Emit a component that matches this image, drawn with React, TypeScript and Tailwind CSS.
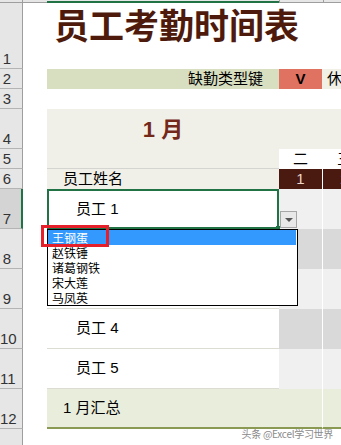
import type { ReactNode } from 'react'

type Cell = { cls?: string; children?: ReactNode }

function Row({ num, h, sel, b, c, d }: { num: string; h: string; sel?: boolean; b: Cell; c: Cell; d: Cell }) {
  return (
    <div className={`flex ${h}`}>
      {/* row header */}
      <div
        className={`w-[23px] shrink-0 border-b border-[#b4b4b4] flex items-end pb-[2px] text-[15px] leading-none text-[#333] ${
          sel ? 'bg-[#d4d4d4] border-r-2 border-r-[#217346]' : 'bg-[#e6e6e6] border-r border-r-[#9e9e9e]'
        }`}
      >
        <span className="w-[14px] text-center">{num}</span>
      </div>
      <div className="w-[24px] shrink-0 bg-white" />
      <div className={`w-[232px] shrink-0 flex items-center text-[15px] ${b.cls ?? 'bg-white'}`}>{b.children}</div>
      <div className={`w-[43px] shrink-0 flex items-center justify-center text-[15px] ${c.cls ?? 'bg-white'}`}>{c.children}</div>
      <div className={`w-[44px] shrink-0 border-l flex items-center text-[15px] ${d.cls ?? 'bg-white border-l-white'}`}>{d.children}</div>
    </div>
  )
}

const names = ['王钢蛋', '赵铁锤', '诸葛钢铁', '宋大莲', '马凤英']

export default function App() {
  return (
    <div className="relative w-[341px] h-[445px] overflow-hidden bg-white text-black font-['Liberation_Sans','Noto_Sans_CJK_SC',sans-serif]">
      {/* column header strip */}
      <div className="flex h-[3px]">
        <div className="w-[23px] shrink-0 bg-[#e6e6e6] border-r border-b border-[#9e9e9e]" />
        <div className="w-[24px] shrink-0 bg-[#e6e6e6] border-b border-[#9e9e9e]" />
        <div className="w-[232px] shrink-0 bg-[#e6e6e6] border-b-2 border-[#217346]" />
        <div className="w-[44px] shrink-0 bg-[#e6e6e6] border-l border-b border-[#9e9e9e]" />
        <div className="w-[44px] shrink-0 bg-[#e6e6e6] border-l border-b border-[#9e9e9e]" />
      </div>

      <Row
        num="1"
        h="h-[66px]"
        b={{
          cls: 'relative z-10 bg-white items-start pl-[7px] pt-[6px]',
          children: (
            <span className="text-[35px] leading-none font-bold text-[#4e1a0c] whitespace-nowrap">员工考勤时间表</span>
          ),
        }}
        c={{}}
        d={{}}
      />
      <Row
        num="2"
        h="h-[20px]"
        b={{ cls: 'bg-[#d8dec0] justify-end pr-[16px]', children: '缺勤类型键' }}
        c={{ cls: 'bg-[#e07262] font-bold', children: 'V' }}
        d={{ cls: 'bg-[#f0f0e6] border-l-[#f0f0e6] pl-[4px]', children: '休' }}
      />
      <Row num="3" h="h-[20px]" b={{}} c={{}} d={{}} />
      <Row
        num="4"
        h="h-[40px]"
        b={{
          cls: 'bg-[#f0f0e8] justify-center',
          children: <span className="text-[22px] font-bold text-[#74281a]">1 月</span>,
        }}
        c={{ cls: 'bg-[#f0f0e8]' }}
        d={{ cls: 'bg-[#f0f0e8] border-l-[#f0f0e8]' }}
      />
      <Row
        num="5"
        h="h-[20px]"
        b={{ cls: 'bg-[#f0f0e8] border-b border-[#d4d4d0]' }}
        c={{ children: '二' }}
        d={{ cls: 'bg-white border-l-white justify-center', children: '三' }}
      />
      <Row
        num="6"
        h="h-[20px]"
        b={{ cls: 'bg-[#f0f0e8] pl-[16px]', children: '员工姓名' }}
        c={{ cls: 'bg-[#4a1a10] text-[#ead6cc]', children: '1' }}
        d={{ cls: 'bg-[#4a1a10] border-l-white justify-center text-[#ead6cc]', children: '2' }}
      />
      <Row
        num="7"
        h="h-[40px]"
        sel
        b={{
          cls: 'relative bg-white border-2 border-[#217346] pl-[27px]',
          children: (
            <>
              员工 1
              <span className="absolute right-[-3px] bottom-[-2px] w-[4px] h-[3px] bg-[#217346]" />
            </>
          ),
        }}
        c={{ cls: 'bg-[#f0f0f0]' }}
        d={{ cls: 'bg-[#f0f0f0] border-l-white' }}
      />
      <Row
        num="8"
        h="h-[40px]"
        b={{ cls: 'bg-white border-b border-[#dcdcd2]' }}
        c={{ cls: 'bg-[#d9d9d9]' }}
        d={{ cls: 'bg-[#d9d9d9] border-l-white' }}
      />
      <Row
        num="9"
        h="h-[40px]"
        b={{ cls: 'bg-white border-b border-[#dcdcd2]' }}
        c={{ cls: 'bg-[#f0f0f0]' }}
        d={{ cls: 'bg-[#f0f0f0] border-l-white' }}
      />
      <Row
        num="10"
        h="h-[40px]"
        b={{ cls: 'bg-white border-b border-[#dcdcd2] pl-[29px]', children: '员工 4' }}
        c={{ cls: 'bg-[#d9d9d9]' }}
        d={{ cls: 'bg-[#d9d9d9] border-l-white' }}
      />
      <Row
        num="11"
        h="h-[40px]"
        b={{ cls: 'bg-white border-b border-[#dcdcd2] pl-[29px]', children: '员工 5' }}
        c={{ cls: 'bg-[#f0f0f0]' }}
        d={{ cls: 'bg-[#f0f0f0] border-l-white' }}
      />
      <Row
        num="12"
        h="h-[40px]"
        b={{ cls: 'bg-[#e9eddc] border-b-2 border-[#8b9a52] pl-[16px]', children: '1 月汇总' }}
        c={{ cls: 'bg-[#e9eddc] border-b-2 border-[#8b9a52]' }}
        d={{ cls: 'bg-[#e9eddc] border-l-white border-b-2 border-b-[#8b9a52]' }}
      />
      <Row num="" h="h-[20px]" b={{}} c={{}} d={{}} />

      {/* dropdown arrow button */}
      <div className="absolute left-[280px] top-[211px] w-[17px] h-[17px] bg-[#e8e8e8] border border-[#a6a6a6] flex items-center justify-center">
        <svg width="8" height="4" viewBox="0 0 8 4">
          <path d="M0 0 H8 L4 4 Z" fill="#555" />
        </svg>
      </div>

      {/* validation list */}
      <div className="absolute z-20 left-[47px] top-[229px] w-[251px] h-[77px] bg-white border border-black text-[12px] leading-[15px] font-['Noto_Sans_CJK_SC',sans-serif]">
        {names.map((n, i) => (
          <div key={n} className={`h-[15px] pl-[4px] mr-[1px] overflow-hidden ${i === 0 ? 'bg-[#3399ff] text-white' : 'text-black'}`}>
            {n}
          </div>
        ))}
      </div>

      {/* red annotation box */}
      <div className="absolute z-30 left-[41px] top-[225px] w-[68px] h-[22px] border-[3px] border-[#e5202a]" />

      {/* watermark */}
      <div className="absolute right-[8px] top-[428px] text-[10px] leading-[11px] tracking-[-0.3px] text-[#8a8a8a] whitespace-nowrap font-['Noto_Sans_CJK_SC',sans-serif]">
        头条 @Excel学习世界
      </div>
    </div>
  )
}
